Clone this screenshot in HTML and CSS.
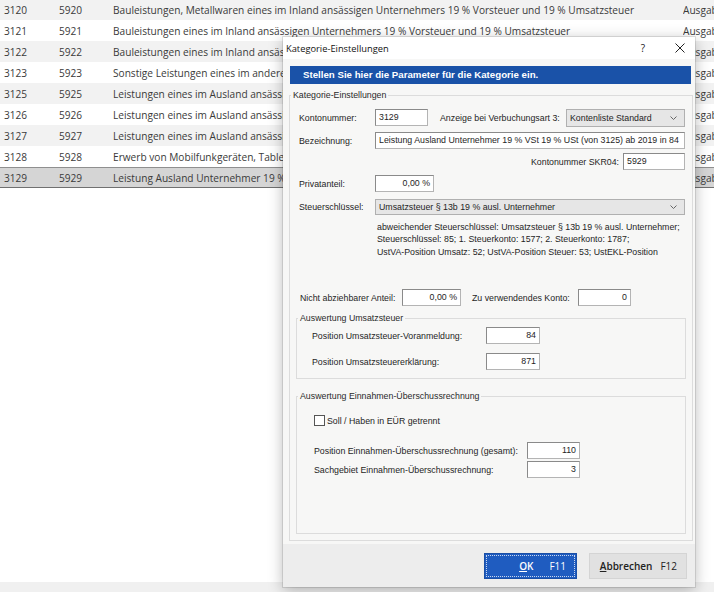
FILE: index.html
```html
<!DOCTYPE html>
<html lang="de">
<head>
<meta charset="utf-8">
<title>Kategorie-Einstellungen</title>
<link rel="stylesheet" href="styles.css">
</head>
<body>
<div class="app">
  <div class="list">
    <div class="row"><span class="c1">3120</span><span>5920</span><span>Bauleistungen, Metallwaren eines im Inland ansässigen Unternehmers 19 % Vorsteuer und 19 % Umsatzsteuer</span><span>Ausgaben</span></div>
    <div class="row"><span class="c1">3121</span><span>5921</span><span>Bauleistungen eines im Inland ansässigen Unternehmers 19 % Vorsteuer und 19 % Umsatzsteuer</span><span>Ausgaben</span></div>
    <div class="row"><span class="c1">3122</span><span>5922</span><span>Bauleistungen eines im Inland ansässigen Unternehmers 7 % Vorsteuer und 7 % Umsatzsteuer</span><span>Ausgaben</span></div>
    <div class="row"><span class="c1">3123</span><span>5923</span><span>Sonstige Leistungen eines im anderen EU-Land ansässigen Unternehmers 19 % Vorsteuer und 19 % Umsatzsteuer</span><span>Ausgaben</span></div>
    <div class="row"><span class="c1">3125</span><span>5925</span><span>Leistungen eines im Ausland ansässigen Unternehmers 19 % Vorsteuer und 19 % Umsatzsteuer</span><span>Ausgaben</span></div>
    <div class="row"><span class="c1">3126</span><span>5926</span><span>Leistungen eines im Ausland ansässigen Unternehmers 7 % Vorsteuer und 7 % Umsatzsteuer</span><span>Ausgaben</span></div>
    <div class="row"><span class="c1">3127</span><span>5927</span><span>Leistungen eines im Ausland ansässigen Unternehmers ohne Vorsteuer und 19 % Umsatzsteuer</span><span>Ausgaben</span></div>
    <div class="row"><span class="c1">3128</span><span>5928</span><span>Erwerb von Mobilfunkgeräten, Tablet-Computern, Spielekonsolen und integrierten Schaltkreisen</span><span>Ausgaben</span></div>
    <div class="row current"><span class="c1">3129</span><span>5929</span><span>Leistung Ausland Unternehmer 19 % VSt 19 % USt (von 3125) ab 2019 in 84</span><span>Ausgaben</span></div>
  </div>
  <div class="hscroll"></div>
</div>

<div class="dialog">
  <div class="titlebar">
    <span class="title">Kategorie-Einstellungen</span>
    <span class="help">?</span>
    <svg class="close" width="10" height="10" viewBox="0 0 10 10"><path d="M0.5 0.5 L9.5 9.5 M9.5 0.5 L0.5 9.5" stroke="#222" stroke-width="1" fill="none"/></svg>
  </div>
  <div class="dbody">
    <div class="banner">Stellen Sie hier die Parameter für die Kategorie ein.</div>
    <fieldset class="grp outer">
      <legend>Kategorie-Einstellungen</legend>
      <div class="gc outer-c">
        <div class="r r1">
          <span class="lbl w76">Kontonummer:</span>
          <span class="inp w53">3129</span>
          <span class="lbl ml12">Anzeige bei Verbuchungsart 3:</span>
          <span class="dd w119 push">Kontenliste Standard<svg class="chev" width="7" height="4" viewBox="0 0 7 4"><path d="M0.5 0.5 L3.5 3.5 L6.5 0.5" stroke="#666" fill="none"/></svg></span>
        </div>
        <div class="r r2">
          <span class="lbl w76">Bezeichnung:</span>
          <span class="inp grow">Leistung Ausland Unternehmer 19 % VSt 19 % USt (von 3125) ab 2019 in 84</span>
        </div>
        <div class="r r3">
          <span class="lbl">Kontonummer SKR04:</span>
          <span class="inp w62 ml4">5929</span>
        </div>
        <div class="r r4">
          <span class="lbl w76">Privatanteil:</span>
          <span class="inp w59 num">0,00 %</span>
        </div>
        <div class="r r5">
          <span class="lbl w76">Steuerschlüssel:</span>
          <span class="dd grow">Umsatzsteuer § 13b 19 % ausl. Unternehmer<svg class="chev" width="7" height="4" viewBox="0 0 7 4"><path d="M0.5 0.5 L3.5 3.5 L6.5 0.5" stroke="#666" fill="none"/></svg></span>
        </div>
        <div class="desc">abweichender Steuerschlüssel: Umsatzsteuer § 13b 19 % ausl. Unternehmer;<br>Steuerschlüssel: 85; 1. Steuerkonto: 1577; 2. Steuerkonto: 1787;<br>UstVA-Position Umsatz: 52; UstVA-Position Steuer: 53; UstEKL-Position</div>
        <div class="r r6">
          <span class="lbl w102">Nicht abziehbarer Anteil:</span>
          <span class="inp w59 num">0,00 %</span>
          <span class="lbl w106 ml11">Zu verwendendes Konto:</span>
          <span class="inp w53 num">0</span>
        </div>

        <fieldset class="grp sub ust">
          <legend>Auswertung Umsatzsteuer</legend>
          <div class="gc ust-c">
            <div class="r">
              <span class="lbl w174">Position Umsatzsteuer-Voranmeldung:</span>
              <span class="inp w54 num">84</span>
            </div>
            <div class="r r-b">
              <span class="lbl w174">Position Umsatzsteuererklärung:</span>
              <span class="inp w54 num">871</span>
            </div>
          </div>
        </fieldset>

        <fieldset class="grp sub eur">
          <legend>Auswertung Einnahmen-Überschussrechnung</legend>
          <div class="gc eur-c">
            <div class="chkrow"><span class="chk"></span><span class="lbl">Soll / Haben in EÜR getrennt</span></div>
            <div class="r r-e1">
              <span class="lbl w213">Position Einnahmen-Überschussrechnung (gesamt):</span>
              <span class="inp w53 num">110</span>
            </div>
            <div class="r r-e2">
              <span class="lbl w213">Sachgebiet Einnahmen-Überschussrechnung:</span>
              <span class="inp w53 num">3</span>
            </div>
          </div>
        </fieldset>
      </div>
    </fieldset>
  </div>
  <div class="footer">
    <button class="btn ok"><span class="bl"><u>O</u>K</span><span class="bk">F11</span></button>
    <button class="btn cancel"><span class="bl"><u>A</u>bbrechen</span><span class="bk">F12</span></button>
  </div>
</div>
</body>
</html>
```
FILE: styles.css
```css
* { box-sizing: border-box; margin: 0; padding: 0; }
html, body { width: 714px; height: 592px; overflow: hidden; background: #fff; }
body { position: relative; font-family: "Open Sans", "Liberation Sans", sans-serif; color: #333; }

.app { display: flex; flex-direction: column; height: 592px; }
.list { flex: 1; margin-top: -1px; overflow: hidden; }
.row {
  display: grid;
  grid-template-columns: 59px 54px 570px 60px;
  height: 21px;
  align-items: center;
  font-size: 10.15px;
  color: #3a3a3a;
  white-space: nowrap;
  overflow: hidden;
}
.row span { overflow: hidden; }
.row:nth-child(odd) { background: #f2f2f2; }
.row .c1 { padding-left: 4px; }
.row.current { background: #d5d5d5; border-top: 1px solid #8f8f8f; border-bottom: 1px solid #707070; }
.hscroll { height: 10px; background: #f0f0f0; flex: none; }

.dialog {
  position: absolute;
  left: 283px; top: 37px;
  width: 412px; height: 550px;
  background: #f7f7f6;
  box-shadow: 0 0 0 1px rgba(0,0,0,0.10), 0 3px 14px rgba(0,0,0,0.28);
  display: flex; flex-direction: column;
  font-family: "Liberation Sans", Arial, sans-serif;
  font-size: 8.8px;
  color: #1e1e1e;
}
.titlebar { height: 22px; flex: none; background: #fff; display: flex; align-items: center; }
.title { flex: 1; padding-left: 3px; font-family: "Open Sans", sans-serif; font-size: 9.3px; color: #111; }
.help { width: 10px; text-align: center; font-family: "Open Sans", sans-serif; font-size: 10px; color: #222; margin-right: 27px; }
.close { display: block; margin-right: 10px; }

.dbody { flex: 1; overflow: hidden; padding: 7px 2px 0 6px; }
.banner {
  height: 18px; line-height: 18px; margin: 0 2px 0 1px;
  background: #1a52a8; color: #fff;
  font-weight: bold; font-size: 9.7px;
  padding-left: 13px;
}

.grp { border: 1px solid #dcdcdc; min-width: 0; }
.grp legend { line-height: 12px; padding: 0 2px; margin-left: 1px; color: #2a2a2a; font-size: 8.8px; }
.outer { margin-top: 5px; }
.outer-c { padding: 8px 7px 6px 9px; }

.r { display: flex; align-items: center; height: 17px; }
.r2 { margin-top: 6px; }
.r3 { margin-top: 4px; justify-content: flex-end; }
.r4 { margin-top: 5px; }
.r5 { margin-top: 7px; height: 16px; }
.r6 { margin-top: 6px; padding-left: 1px; }

.lbl { white-space: nowrap; flex: none; }
.w76 { width: 76px; }
.w102 { width: 102px; }
.w106 { width: 106px; }
.w174 { width: 174px; }
.w213 { width: 213px; }
.ml12 { margin-left: 12px; }
.ml11 { margin-left: 11px; }
.ml4 { margin-left: 4px; }
.push { margin-left: auto; }

.inp {
  height: 17px; line-height: 15px;
  background: #fff;
  border: 1px solid #8a8a8a;
  border-right-color: #b4b4b4; border-bottom-color: #b4b4b4;
  padding: 0 3px;
  white-space: nowrap; overflow: hidden;
  flex: none;
}
.inp.num { text-align: right; }
.grow { flex: 1; }
.w53 { width: 53px; }
.w54 { width: 54px; }
.w59 { width: 59px; }
.w62 { width: 62px; }
.w119 { width: 119px; }

.dd {
  height: 16px;
  display: flex; align-items: center; justify-content: space-between;
  background: #e6e6e6; border: 1px solid #b0b0b0;
  padding: 0 7px 0 3px;
  white-space: nowrap; overflow: hidden;
  flex: none;
}
.dd.grow { flex: 1; }
.r1 .dd { height: 18px; }
.chev { display: block; flex: none; }

.desc { margin-top: 6px; height: 62px; padding-left: 78px; line-height: 12.4px; color: #1e1e1e; }

.sub { margin-left: -3px; margin-right: -1px; }
.ust { margin-top: 6px; }
.ust-c { padding: 3px 0 8px 15px; }
.r-b { margin-top: 9px; }
.eur { margin-top: 11px; }
.eur-c { padding: 12px 0 55px 17px; }
.chkrow { display: flex; align-items: center; height: 13px; }
.chk { width: 11px; height: 11px; background: #fff; border: 1px solid #555; margin-right: 2px; flex: none; }
.r-e1 { margin-top: 15px; }
.r-e2 { margin-top: 2px; }

.footer {
  height: 43px; flex: none;
  background: #ededed;
  display: flex; justify-content: flex-end; align-items: flex-start;
  padding: 9px 8px 0 0;
  gap: 12px;
}
.btn {
  height: 26px;
  display: flex; align-items: center; justify-content: flex-end;
  font-family: "Open Sans", sans-serif; font-weight: 600; font-size: 10px;
  border: 1px solid transparent;
}
.btn u { text-decoration: underline; }
.ok {
  width: 93px; background: #1f5cc0; color: #fff;
  border-color: #1a4fa6;
  outline: 1px dotted #c9d6ee; outline-offset: -3px;
  padding-right: 10px;
}
.ok .bk { margin-left: 16px; font-weight: 500; }
.cancel {
  width: 98px; background: #e1e1e1; color: #222;
  border-color: #d4d4d4;
  padding-right: 9px;
}
.cancel .bk { margin-left: 8px; font-weight: 500; }
```
